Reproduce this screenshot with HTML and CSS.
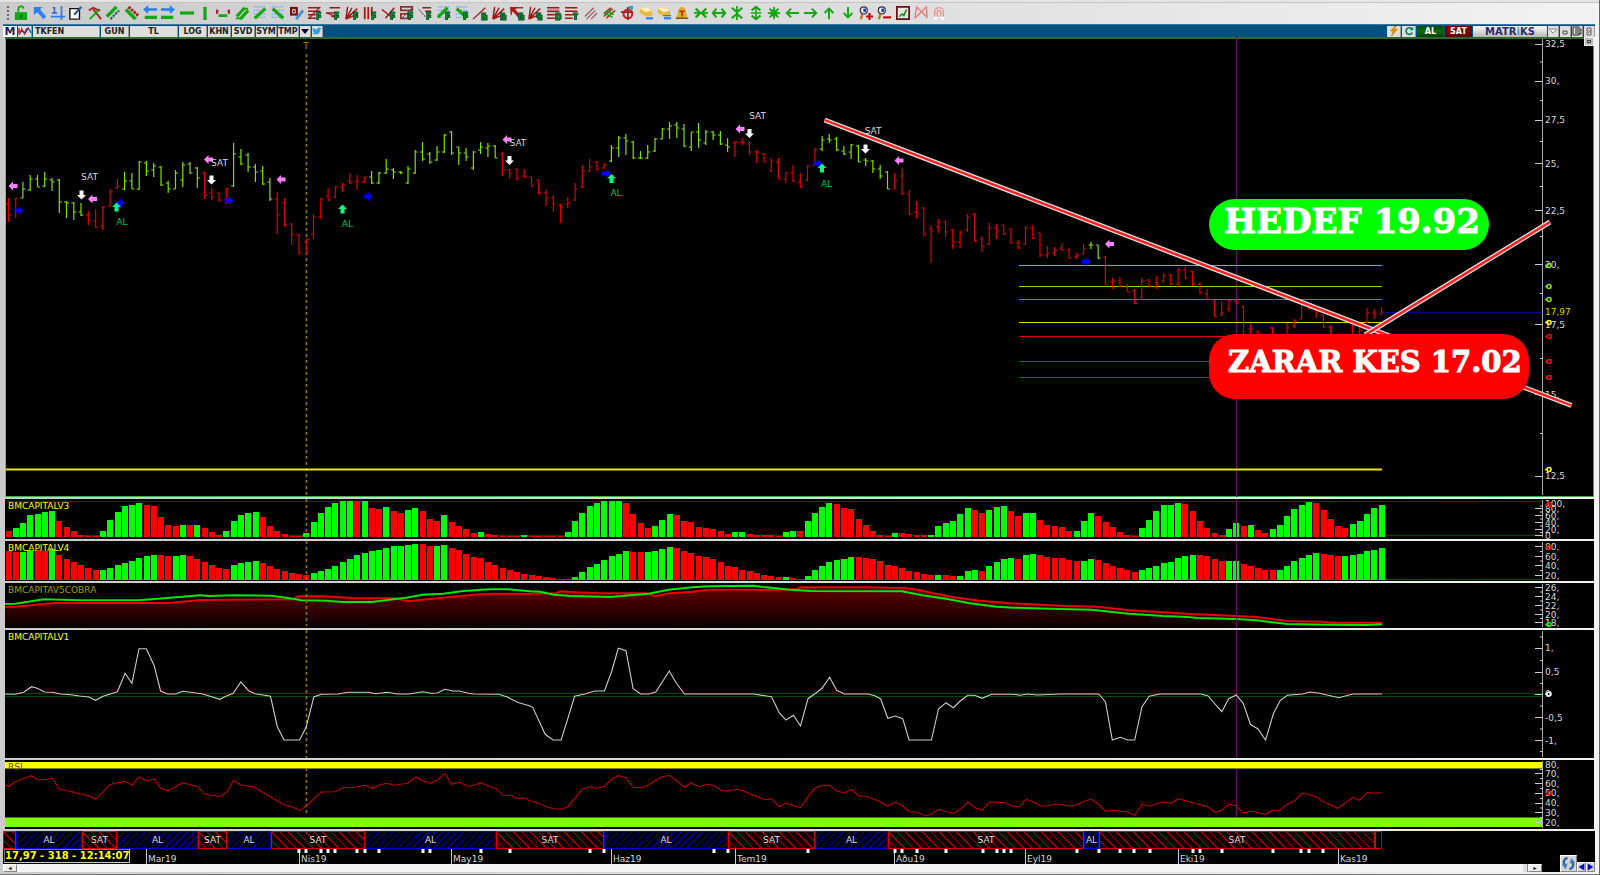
FILE: index.html
```html
<!DOCTYPE html>
<html lang="tr">
<head>
<meta charset="utf-8">
<title>TKFEN - Matriks</title>
<link rel="stylesheet" href="styles.css">
</head>
<body>
<div class="window">
  <nav class="toolbar" id="toolbar" aria-label="Araçlar"></nav>

  <header class="titlebar">
    <span class="brand-mark">M</span>
    <button class="tb-icon" aria-label="Grafik tipi"><svg viewBox="0 0 15 10"><path d="M1 2v6M1 5h3V3l3 5 2-5 2-1" fill="none" stroke="#c22" stroke-width="1.6"/><path d="M1 9l3-4 4 2 3-5 3 5" fill="none" stroke="#338" stroke-width="1.2"/></svg></button>
    <input class="symbol" aria-label="Sembol" value="TKFEN">
    <button class="w28">GUN</button>
    <button class="w48">TL</button>
    <button class="w28">LOG</button>
    <button class="w23">KHN</button>
    <button class="w23">SVD</button>
    <button class="w22">SYM</button>
    <button class="w22">TMP</button>
    <button class="tb-small" aria-label="Menü"><svg viewBox="0 0 10 10"><path d="M1 3h8L5 8z" fill="#003"/></svg></button>
    <button class="tb-small" aria-label="Twitter"><svg viewBox="0 0 12 10"><path d="M0 8c2 1 7 2 9-1 1-2 1-3 1-4l2-2-2 .3C8 0 6 1 6 3 4 3 2 2 1 1c-1 2 0 3 1 4L.6 4.600C1 6 2 6.500 3 7z" fill="#2fa4dd"/></svg></button>
    <span class="spacer"></span>
    <button class="tb-icon" aria-label="Hızlı emir"><svg viewBox="0 0 12 12"><path d="M7 0L2 6h3l-2 6 7-8H6l3-4z" fill="#f29100" stroke="#a50" stroke-width=".5"/></svg></button>
    <button class="tb-icon" aria-label="Yenile"><svg viewBox="0 0 12 12"><path d="M9.500 3.500A4 4 0 1 0 10 8" fill="none" stroke="#0a7d5c" stroke-width="2"/><path d="M7 5h4V1z" fill="#0a7d5c"/></svg></button>
    <button class="buy">AL</button>
    <button class="sell">SAT</button>
    <span class="brand">MATR<i>i</i>KS</span>
    <button class="tb-win" aria-label="Küçült"><svg viewBox="0 0 10 10"><path d="M1 3h8L5 7z" fill="#fff" stroke="#888"/></svg></button>
    <button class="tb-win" aria-label="Simge"><svg viewBox="0 0 10 10"><path d="M3 5h4v3H3z" fill="none" stroke="#444"/></svg></button>
    <button class="tb-win" aria-label="Pencere"><svg viewBox="0 0 10 10"><path d="M1 1h6v8H1zM3 3h3M3 5h3M3 7h3M8 3h1v5H7" fill="none" stroke="#222"/></svg></button>
    <button class="tb-win" aria-label="Kapat"><svg viewBox="0 0 10 10"><path d="M3 2h4v7H3zM4 4l3 3M7 4L4 7" fill="none" stroke="#666"/></svg></button>
  </header>

  <main class="charts">
    <section class="panel price" id="price">
      <div class="callout target">HEDEF 19.92</div>
      <div class="callout stop">ZARAR KES 17.02</div>
      <button class="maximize" aria-label="Büyüt"></button>
    </section>
    <section class="panel" id="v3"><h2>BMCAPITALV3</h2></section>
    <section class="panel" id="v4"><h2>BMCAPITALV4</h2></section>
    <section class="panel" id="cobra"><h2 class="dim">BMCAPITAV5COBRA</h2></section>
    <section class="panel" id="v1"><h2>BMCAPITALV1</h2></section>
    <section class="panel" id="rsi"><h2 class="ink">RSI</h2></section>
  </main>

  <footer class="footer">
    <div class="signals" id="signals"></div>
    <div class="dates" id="dates"><output class="quote">17,97 - 318 - 12:14:07</output></div>
    <div class="scroll">
      <button aria-label="Sola">◂</button>
      <span class="track"></span>
      <span class="thumb"></span>
      <button aria-label="Sağa">▸</button>
      <span class="axis-room"></span>
    </div>
    <div class="corner">
      <button class="refresh" aria-label="Güncelle"><svg viewBox="0 0 16 16"><path d="M7 2C3 3 2 7 4 10M9 14c4-1 5-5 3-8" fill="none" stroke="#2a62a8" stroke-width="2.500"/><path d="M1 9l6-1-2 6zM15 7L9 8l2-6z" fill="#3f7cc0"/></svg></button>
      <button class="step" aria-label="Geri"><svg viewBox="0 0 10 10"><path d="M9 0v10L1 5z" fill="#00c"/></svg></button>
      <button class="step" aria-label="İleri"><svg viewBox="0 0 10 10"><path d="M1 0v10l8-5z" fill="#00c"/></svg></button>
    </div>
  </footer>
</div>
<script src="chart.js"></script>
</body>
</html>
```
FILE: styles.css
```css
* { box-sizing: border-box; }

body {
  margin: 0;
  font-family: "DejaVu Sans", Verdana, sans-serif;
  font-size: 9px;
  background: #dcdcdc;
}

button, input { font: inherit; margin: 0; padding: 0; border: 0; border-radius: 0; }
button svg { display: block; }

.window {
  display: flex;
  flex-direction: column;
  min-height: 100vh;
  padding: 0 4px 0 3px;
  background-color: #dedede;
  background-image: linear-gradient(#e4e4e4 2px, #c4c4c4 2px, #c4c4c4 3px, transparent 3px), linear-gradient(90deg, #cbcbcb, #dcdcdc 50%, #f2f2f2);
  border-right: 1px solid #666;
  border-bottom: 1px solid #777;
  overflow: hidden;
}

/* Toolbar */
.toolbar {
  display: flex;
  justify-content: space-between;
  align-items: center;
  max-width: 944px;
  height: 22px;
  margin-top: 2px;
  padding-left: 4px;
}
.toolbar button { width: 14px; height: 14px; background: none; }
.toolbar button svg { width: 14px; height: 14px; overflow: visible; }
.toolbar .grip { width: 3px; height: 14px; border-left: 2px dotted #567; }

/* Title bar */
.titlebar {
  display: flex;
  align-items: center;
  gap: 1px;
  height: 13px;
  padding: 1px 0;
  background: #03517f;
  border-top: 1px solid #3c7898;
  font-size: 8px;
  font-weight: bold;
  color: #222;
}
.titlebar button, .titlebar input { height: 11px; line-height: 11px; background: #dedede; border-right: 1px solid #999; color: #222; }
.titlebar svg { width: 10px; height: 10px; margin: 0 auto; }
.brand-mark { width: 14px; height: 11px; background: #fff; color: #1b1d5e; font: bold 11px/11px "DejaVu Sans", sans-serif; text-align: center; }
.titlebar .tb-icon { width: 14px; }
.titlebar .tb-icon:nth-child(2) svg { width: 14px; }
.titlebar .symbol { width: 67px; padding-left: 2px; }
.titlebar .w28 { width: 28px; }
.titlebar .w48 { width: 48px; }
.titlebar .w23 { width: 23px; }
.titlebar .w22 { width: 21px; }
.titlebar .tb-small, .titlebar .tb-win { width: 11px; }
.spacer { flex: 1; }
.titlebar .buy, .titlebar .sell { width: 27px; color: #fff; border: 0; }
.titlebar .buy { background: linear-gradient(#0a4d0a, #0b6a0b 50%, #063f06); }
.titlebar .sell { background: linear-gradient(#6d0000, #8a0000 50%, #5a0000); }
.brand { width: 74px; height: 11px; background: linear-gradient(#fafafa, #b8b8b8); color: #2c2a6c; font: bold 10px/11px "DejaVu Sans", sans-serif; text-align: center; }
.brand i { font-style: normal; color: #2fa4dd; }

/* Panels */
.charts {
  flex: 1;
  display: grid;
  grid-template-rows: 460fr 40fr 40fr 45fr 128fr 69fr;
  gap: 2px;
  margin: 0 1px 0 2px;
}
.panel { position: relative; overflow: hidden; background: #000; min-height: 0; }
.panel > svg { position: absolute; inset: 0; width: 100%; height: 100%; }
.price { box-shadow: inset 0 2px #2f6a2f, inset 1px 0 #6fcf6f, inset -1px -1px #4aa84a; }
.panel h2 { position: absolute; z-index: 2; top: 2px; left: 3px; margin: 0; font-size: 9px; line-height: 11px; font-weight: normal; color: #ff0; }
.panel h2.dim { color: #a0a000; }
.panel h2.ink { color: #4a4a00; }
.label { position: absolute; z-index: 2; line-height: 10px; white-space: nowrap; color: #d8d8d8; transform: translate(-50%, -50%); }
.label.axis { transform: translate(0, -50%); }
.label.buy-signal { color: #00c060; }
.label.last { color: #d8d800; }
.label.session { color: #a09000; }
.overlay { z-index: 3; }

.callout {
  position: absolute;
  z-index: 4;
  left: 75.770%;
  display: flex;
  border-radius: 26px;
  color: #fff;
  font-family: "DejaVu Serif", "Liberation Serif", serif;
  font-weight: bold;
  white-space: nowrap;
  -webkit-text-stroke: 1px #fff;
}
.target { top: 35.200%; width: 280px; height: 51px; padding-left: 15px; background: #0f0; font-size: 34px; line-height: 45px; }
.stop { top: 64.500%; width: 320px; height: 65px; padding-left: 19px; background: #f00; font-size: 29px; line-height: 56px; }
.maximize { position: absolute; z-index: 4; right: 0; top: 0; width: 10px; height: 9px; background: #bbb; border: 1px solid #eee; outline: 1px solid #444; outline-offset: -4px; }

/* Footer */
.footer { position: relative; margin-top: 2px; padding-bottom: 2px; }
.signals { display: flex; height: 18px; background: #000; }
.signals span { flex-basis: 0; min-width: 0; overflow: hidden; text-align: center; line-height: 18px; color: #ddd; }
.signals .al { box-shadow: inset 0 0 0 1px #0000d8; background: repeating-linear-gradient(135deg, #0000a0 0 1px, #00000c 1px 5px); }
.signals .sat { box-shadow: inset 0 0 0 1px #d80000; background: repeating-linear-gradient(45deg, #a80000 0 1px, #0c0000 1px 6px); }
.signals .open { box-shadow: inset 0 0 0 1px #d80000; }
.dates { position: relative; height: 15px; background: #000; }
.dates svg { position: absolute; inset: 0; width: 100%; height: 100%; }
.quote { position: absolute; z-index: 3; left: 1px; top: 0; height: 14px; background: #000; border: 1px solid; border-color: #777 #ccc #ccc #777; color: #ff0; font-size: 10px; line-height: 12px; font-weight: bold; white-space: nowrap; }
.scroll { display: flex; height: 8px; background: #f4f4f4; }
.scroll button { width: 14px; height: 8px; font-size: 6px; line-height: 6px; background: #ececec; border: 1px solid; border-color: #fff #888 #888 #fff; }
.track { flex: 1; }
.thumb { width: 5px; background: #ddd; border-right: 1px solid #888; }
.axis-room { width: 53px; background: #000; }
.corner { position: absolute; z-index: 4; right: 0; bottom: 2px; display: flex; align-items: flex-end; }
.corner button { background: #d4d4d4; border: 1px solid; border-color: #fff #888 #888 #fff; }
.refresh { width: 17px; height: 17px; }
.step { width: 9px; height: 10px; }
.step svg { width: 7px; height: 8px; }
```
FILE: chart.js
```js
const X0 = 5, W = 1589, AXIS = 1542.5, N = 190;
const barX = i => 8.4 + 7.265 * i;
const GREEN = '#80e000', RED = '#e00000';

/* ---------- toolbar ---------- */
const p = (d, c, w = 1.5, extra = '') => `<path d="${d}" fill="none" stroke="${c}" stroke-width="${w}" ${extra}/>`;
const f = (d, c) => `<path d="${d}" fill="${c}"/>`;
const G = '#12a812', DR = '#a01818', B = '#2a80f0';
const mark = { F: 'M11 16V8h4M11 12h4', G: 'M15 9h-4v6h4v-3h-2', S: 'M15 9h-4v3h4v3h-4', D: 'M11 9h3l1 2v3l-1 1h-3z', T: 'M9 9h6M12 9v7' };
const tag = k => p(mark[k], '#043', 3.2) + p(mark[k], '#0a8a20', 1.5);
const rows = p('M0 2h14M0 6h14M0 10h9M0 14h9', DR, 1.8);
const dots = p('M1 1h14M1 5h14M1 9h14M1 13h14', '#6aa0f0', 1.6, 'stroke-dasharray="1.5 1.3"');
const fan = p('M1 15L3 1M1 15L8 2M1 15L14 3M1 15L15 9', DR, 1.7);
const eraser = f('M1 3l7-2 7 4v6l-7 1-7-4z', '#e8b840') + f('M1 3l7-2 7 4-7 2z', '#fff0b8') + p('M8 14h8', B, 2.4);
const lens = f('M9.500 5a4 4 0 1 1-8 0 4 4 0 0 1 8 0z', '#eef') + p('M9.500 5a4 4 0 1 1-8 0 4 4 0 0 1 8 0z', '#334', 1.4) + f('M5 3h3v4H5z', '#2540a0') + p('M4 9l-2 6', '#b07a10', 2.6);
const icons = [
  ['Kilit', p('M5 7V4a3 3 0 0 1 6-1', G, 2) + f('M1 7h14v9H1z', G) + f('M7 10h2v4H7z', '#063')],
  ['Seç', f('M1 1h10L8 4l7 8-3 3-7-8-4 3z', B)],
  ['Artı imleç', p('M0 12h16M12 0v16', B, 2) + p('M1 8h6M4 1v7M2 2h2', '#2060d0', 1.6)],
  ['Düzenle', f('M1 3h12v13H1z', '#fff') + p('M1 3h11v12H1z', '#111', 1.6) + p('M6 10l8-9', '#258', 2.5)],
  ['Ayarlar', p('M1 5l5-3 4 2 4 1M6 4l9 11', '#a22', 2.2) + p('M2 15L12 5', G, 2.2)],
  ['Yükselen trend', p('M1 12L12 1', G, 4) + p('M5 15L15 5', '#275', 2.6, 'stroke-dasharray="3 1"')],
  ['Düşen trend', p('M1 4l11 11', G, 4) + p('M4 1l11 10', '#a22', 3.4, 'stroke-dasharray="3 1"')],
  ['Sola', p('M5 4h11', B, 3) + f('M0 4l6-5v10z', B) + p('M2 13h14', G, 3.8)],
  ['Sağa', p('M0 4h11', B, 3) + f('M16 4l-6-5v10z', B) + p('M0 13h14', G, 3.8)],
  ['Yatay çizgi', p('M0 8h16', G, 3.6)],
  ['Dikey çizgi', p('M8 1v15', G, 3.8)],
  ['Ölçü', p('M1 4v5M15 4v5M0 6h3M13 6h3', '#a22', 2) + p('M3 11h10', G, 3.2)],
  ['Kanal', p('M2 12L11 2M6 15L15 5', G, 3.6) + p('M1 14h6M10 3h5', G, 2)],
  ['Izgara artan', dots + p('M2 14L14 3', G, 3.8)],
  ['Izgara azalan', dots + p('M2 3l12 11', G, 3.8)],
  ['Kalem', f('M0 1h9v10H0z', '#701010') + p('M3 4h3v4H3z', '#eee', 1) + p('M7 15l8-10', '#4a90d0', 3.2)],
  ['Fibo 1', rows + p('M1 14L14 1', DR) + tag('F')],
  ['Fibo 2', p('M4 2h12M0 8h14M6 12h4', DR, 1.8) + p('M1 8l12 5', DR) + tag('F')],
  ['Fibo 3', fan + tag('F')],
  ['Fibo 4', p('M2 1v14M6 1v14M10 1v10', DR, 2) + tag('F')],
  ['Fibo 5', p('M0 4l10 8M4 14L14 2', DR, 1.8) + tag('F')],
  ['Fibo 6', p('M1 1h13v4H1zM1 9h8v5H1z', '#833', 2) + p('M2 14L14 2', '#444', 1) + tag('F')],
  ['Fibo 7', p('M5 2h10M8 6h7', DR, 1.8) + p('M1 4l8 9', '#555', 1.2, 'stroke-dasharray="2 1"') + tag('F')],
  ['Fibo 8', dots + p('M1 13L12 2', G, 3.8) + tag('F')],
  ['Fibo 9', dots + p('M2 3l10 9', G, 3.8) + tag('F')],
  ['Gann 1', p('M0 15L14 2', DR) + tag('G')],
  ['Gann 2', fan + tag('G')],
  ['Gann 3', f('M0 1h9L6 4l8 9-3 2L3 6l-2 6z', '#b01818') + p('M6 2h9', DR) + tag('G')],
  ['Hız', fan + tag('S')],
  ['Seviye D', rows + p('M1 4h14M1 8h8', '#666', 1, 'stroke-dasharray="1 1"') + tag('D')],
  ['Seviye T', rows + tag('T')],
  ['Paralel', p('M1 12L11 2M3 15L13 5M8 15l7-7', '#955', 1.3)],
  ['Elips', p('M2 12L12 3M5 14L15 5M2 9L10 2', '#932', 1.8) + p('M3 8l9 5M5 5l8 5', G, 1.8)],
  ['Daire', p('M14 9a5 5 0 1 1-10 0 5 5 0 0 1 10 0z', '#c22', 2.4) + p('M1 7h14M9 1v15', '#922', 2) + f('M10 0h5v4h-5z', '#3aa0b0')],
  ['Sil', eraser],
  ['Hepsini sil', eraser + p('M7 11h9', B, 1.6)],
  ['Alarm', f('M1 14c3-3 1-13 7-13s4 10 7 13z', '#d8b020') + p('M5 6h6M8 6v6', '#c22', 1.8) + p('M1 14h14', '#741', 1.5)],
  ['Daralt', p('M0 8h16', G, 2) + p('M2 3l5 5-5 5M14 3L9 8l5 5', G, 2.6)],
  ['Genişlet', p('M2 8h12', G, 2.4) + p('M5 3L1 8l4 5M11 3l4 5-4 5', G, 2.4)],
  ['Dikey daralt', p('M8 0v16', G, 2) + p('M2 2l6 5 6-5M2 14l6-5 6 5', G, 2.4)],
  ['Dikey genişlet', p('M8 2v12M2 8h12', G, 1.8) + p('M3 5l5-4 5 4M3 11l5 4 5-4', G, 2.4)],
  ['Sığdır', p('M8 1v14M1 8h14M3 3l10 10M13 3L3 13', G, 2) + p('M5 5h6v6H5z', G, 1.5)],
  ['Sol ok', p('M2 8h14M7 3L2 8l5 5', G, 2.2)],
  ['Sağ ok', p('M0 8h14M9 3l5 5-5 5', G, 2.2)],
  ['Yukarı ok', p('M8 15V3M3 8l5-5 5 5', G, 2.2)],
  ['Aşağı ok', p('M8 1v12M3 8l5 5 5-5', G, 2.2)],
  ['Yakınlaştır', lens + p('M8 12h8M12 8v8', '#c00', 2.4)],
  ['Uzaklaştır', lens + p('M7 13h9', '#c00', 2.4)],
  ['Grafik', f('M1 1h14v14H1z', '#dfe8df') + p('M1 1h14v14H1z', '#611', 2) + p('M4 12l3-3 2 2 3-7', '#187018', 1.6)],
  ['Formasyon', p('M1 14L3 1l11 11M1 14L14 1l1 13', '#ec7878', 1.5)],
  ['Mıknatıs', p('M3 12V7a5 5 0 0 1 10 0v5M6 12V7a2 2 0 0 1 4 0v5', '#f08080', 1.3) + p('M2 14h4M10 14h4', '#fff', 3)],
];
document.getElementById('toolbar').innerHTML = '<span class="grip"></span>' + icons
  .map(([name, body]) => `<button aria-label="${name}"><svg viewBox="0 0 16 16">${body}</svg></button>`).join('');

/* ---------- chart data ---------- */
// high low open close per session, vertical plot coordinates
const ohlc = `198 222 204 215,198 218 211 198,182 198 198 189,175 191 190 179,175 187 179 187,172 187 186 179,178 191 180 182,179 213 180 202,201 218 202 203,202 220 203 212,203 216 212 215,211 225 215 220,209 228 221 227,206 230 226 207,189 207 206 192,179 189 188 186,172 190 189 181,173 189 181 189,161 190 189 162,161 176 163 171,163 177 170 166,166 186 167 185,181 193 183 189,170 189 189 173,162 187 180 165,162 174 164 173,167 188 168 178,172 199 173 195,188 200 193 197,193 202 193 200,188 204 200 189,143 187 186 154,149 165 157 164,153 172 155 167,164 182 167 172,166 185 171 184,178 201 182 199,192 234 199 215,198 227 203 225,223 245 224 234,234 255 235 253,239 254 242 239,214 239 234 217,198 219 217 199,188 201 196 200,186 198 197 187,183 192 187 185,173 184 181 183,175 190 182 181,177 183 182 177,171 184 177 183,172 184 183 173,159 174 173 169,168 179 170 172,171 174 172 173,166 184 183 169,150 174 173 152,142 161 152 159,152 164 154 162,146 161 160 152,134 153 152 135,131 155 132 153,147 165 147 153,148 161 153 157,151 170 168 152,142 154 150 147,143 157 148 146,145 158 146 158,152 176 154 170,169 179 170 173,169 181 169 178,169 178 176 177,177 187 177 186,180 195 180 193,190 206 193 198,195 212 198 204,204 223 205 207,197 208 204 203,183 201 200 189,165 188 187 171,159 172 171 167,161 171 162 169,163 169 168 165,145 162 161 148,136 157 148 138,134 155 138 141,141 159 142 158,151 159 158 158,145 159 158 152,138 152 151 139,128 139 139 129,122 139 129 126,122 138 125 128,124 147 129 146,132 151 147 132,123 148 132 140,130 145 143 132,131 140 132 135,131 145 135 144,138 152 145 147,141 157 143 142,138 145 142 143,142 155 144 152,150 163 152 152,153 162 154 162,158 172 171 161,158 179 162 179,172 183 179 173,165 182 173 181,173 188 182 187,165 181 180 166,148 166 165 149,136 151 149 140,134 143 139 140,137 151 139 150,146 155 151 154,144 159 152 145,145 162 146 162,158 166 160 161,160 173 161 169,165 179 169 176,171 189 172 189,173 189 189 181,168 195 176 194,190 215 194 214,201 219 212 214,207 237 208 234,225 263 229 231,219 233 227 222,220 237 222 232,229 249 230 242,230 248 242 233,214 232 230 217,213 242 214 241,236 252 239 246,223 245 244 228,224 239 228 231,225 235 225 234,228 244 229 243,240 249 243 248,226 245 244 228,225 239 228 238,233 257 233 255,246 258 255 253,247 256 253 250,243 251 248 250,248 259 250 258,253 259 257 255,244 254 254 249,242 249 245 245,245 259 245 258,256 285 257 284,278 289 282 281,277 287 281 286,284 292 287 292,289 304 291 303,278 300 299 281,279 288 280 286,276 289 287 284,274 283 281 276,274 285 275 284,268 287 284 270,266 279 270 278,271 286 271 284,282 294 284 293,289 300 294 299,300 317 300 317,301 316 315 313,300 312 309 301,299 304 301 303,305 338 307 336,324 342 329 329,330 350 332 345,335 350 340 345,327 342 328 340,335 350 338 340,323 338 337 328,319 328 326 321,304 319 319 305,303 310 304 308,307 318 310 312,314 328 315 327,325 338 327 334,335 350 337 345,336 350 345 338,323 338 337 326,326 335 332 330,308 323 322 313,309 319 313 314,307 315 314 312`
  .split(',').map(s => s.split(' ').map(Number));
const upRanges = [[2, 10], [16, 26], [31, 36], [50, 67], [83, 99], [112, 121], [149, 150]];
const v3 = 'R122 G114 G99 G76 G72 G66 G64 R92 R111 R124 R134 R138 R138 G124 G91 G66 G48 G44 G39 R44 R48 R82 R104 R109 G104 R104 G104 R114 R126 R134 G124 G94 G76 G69 G66 R82 R107 R122 R132 R138 R138 G129 G97 G69 G52 G39 G34 G34 R34 G34 R54 R56 G51 R64 R69 G61 G54 R62 R87 R92 G76 R96 R107 R117 R129 G126 R131 R134 R137 R138 R138 G136 R138 R138 R138 R138 R138 G126 G94 G69 G48 G39 G34 G34 G34 R39 R72 R99 R114 G109 G91 G72 R74 R94 R97 R111 R114 R117 R124 R131 G126 G126 R131 R134 R136 R136 R138 G126 G124 R124 G94 G69 G52 G39 R41 R54 R57 R87 R106 R124 R134 R138 G129 R129 R131 R134 R136 G134 G109 G99 G94 G72 G54 R59 R69 G59 G51 G48 R62 R79 G69 G69 R89 R104 R109 R111 R122 G122 G92 G69 R79 R97 R112 R127 R136 R138 G114 G89 G64 G46 G44 G39 R42 R64 R94 R114 R129 R134 G117 G99 R108 G106 R119 R129 G117 G104 G79 G57 G44 G36 R39 R61 R87 R108 R114 G101 G94 G72 G54 G44';
const v4 = 'R182 R186 G185 G180 R180 R182 G178 R194 R207 R217 R226 R234 R241 G240 G233 G226 G219 G213 G204 G199 G194 R196 R199 G199 G196 R199 R207 R217 R226 R234 R237 G224 G219 G216 G213 R219 R229 R237 R242 R249 R252 R255 G249 G244 G237 G229 G216 G207 G196 G189 G184 G179 G174 G169 G167 G164 G161 R161 R169 G168 G164 R174 R179 R192 R201 R204 R216 R224 R234 R239 R247 R252 R255 R259 R262 R264 R267 R267 G262 G247 G232 G221 G209 G199 G192 G184 R186 R186 G186 G182 G177 G171 R174 R184 R189 R197 R201 R207 R217 R227 R232 R239 R244 R249 R254 R257 R262 G262 R264 R267 G257 G241 G229 G216 G209 G207 G201 R201 R204 R207 R214 R224 R227 R234 R242 R247 R251 R254 G254 R254 R259 G257 G244 G241 R244 G229 G216 G207 G204 R207 G196 G192 R196 R201 R204 R204 R209 R214 G214 G207 R209 R219 R227 R234 R241 R247 G239 G234 G229 G219 G216 G204 G199 G194 R194 R197 R207 R212 G212 G212 R222 R227 R234 R241 R241 G239 G227 G214 G204 G196 G189 R192 R194 R199 G199 G194 G192 G184 G179 G174';
// each line is stored in three consecutive segments
const cobraUp = ['15,342 45,341 130,328 240,331 410,331 540,320 590,316 620,318 690,316 800,317 830,321 870,327 890,331 965,332 1010,336 1100,336 1140,331 1200,323 1250,314 1310,311 1370,303 1450,298 1500,298',
  '0,304 30,305 70,314 120,318 240,321 270,318 350,311 410,299 480,292 530,289 660,287 690,291 770,299 830,303 1100,304 1160,316 1230,326 1300,340 1380,350 1430,353',
  '0,357 90,359 200,371 300,378 370,381 400,384 510,387 570,391 660,402 780,404 890,405 935,403'];
const cobraDown = ['15,351 45,350 160,339 500,339 590,330 870,328 880,319 960,319 1040,324 1175,325 1190,330 1210,334 1240,330 1300,324 1400,314 1450,311',
  '0,311 75,310 90,304 140,307 200,309 345,310 370,319 410,310 480,305 530,299 760,299 790,297 800,292 990,292 1110,294 1150,300 1190,309 1250,321 1330,332 1420,340',
  '0,347 110,350 200,361 300,367 380,372 500,377 570,381 660,393 760,395 790,398 935,398'];
const v1 = ['15,612 45,613 70,607 93,590 110,595 132,606 155,607 180,612 210,614 235,618 262,621 283,631 305,619 347,605 370,550 390,580 411,476 433,476 456,527 475,603 495,612 520,612 540,604 565,607 600,612 650,628 670,618 690,610 712,576 735,602 755,611 800,619 820,710 840,750 886,750 905,712 928,621 950,613 1000,612 1030,607 1090,607 1110,611 1145,607 1175,612 1210,612 1250,605 1275,610 1293,609 1316,598 1340,603 1358,603 1385,610 1400,612 1475,613 1500,621 1530,637',
  '0,648 8,652 45,733 68,750 92,750 112,685 132,619 165,611 190,603 220,603 241,546 261,475 284,482 305,596 327,612 350,612 372,606 412,543 433,580 457,612 660,612 714,620 737,668 757,690 779,676 800,708 822,626 842,612 864,594 886,562 907,601 930,612 1000,612 1020,617 1037,627 1058,685 1080,678 1102,686 1121,750 1187,750 1208,657 1230,638 1252,653 1272,633 1295,616 1315,616 1337,625 1365,613 1430,613 1450,616 1470,612 1500,615',
  '0,612 112,612 132,636 152,750 175,742 197,750 217,750 238,650 259,619 290,612 410,612 430,618 450,642 470,665 490,626 512,615 532,640 553,703 575,717 597,750 620,670 640,631 660,616 705,612 725,606 750,609 810,623 850,612 935,612'];
const rsi = ['15,885 27,889 45,875 68,866 93,857 110,869 135,869 155,865 175,897 200,902 262,917 283,928 325,884 345,879 370,874 390,885 411,861 433,873 456,868 475,895 497,902 540,878 585,890 605,912 650,920 672,905 690,871 712,885 750,890 780,909 840,945 865,951 886,962 905,948 950,906 990,905 1015,893 1050,892 1080,886 1102,895 1122,885 1142,880 1165,886 1205,880 1230,861 1250,873 1272,880 1295,869 1316,851 1335,883 1358,877 1385,889 1400,886 1422,878 1445,889 1467,896 1487,916 1510,916 1530,926 1550,923',
  '0,932 25,940 50,951 70,956 92,958 112,950 132,925 155,898 178,890 198,895 220,889 241,868 261,857 284,863 305,893 330,893 350,885 372,871 390,861 412,856 433,872 457,892 475,879 500,890 523,883 545,887 565,901 585,904 610,898 630,902 650,912 695,929 714,926 737,950 757,939 779,947 800,953 822,920 842,895 864,886 886,886 907,904 930,908 950,898 972,918 995,919 1037,936 1058,948 1080,936 1102,948 1121,965 1145,967 1168,978 1187,972 1208,958 1230,965 1252,970 1272,958 1295,936 1315,953 1337,961 1358,937 1380,936 1405,938 1425,948 1447,951 1467,928 1490,937 1510,948 1530,948 1550,943',
  '0,943 27,949 45,946 70,934 90,928 112,943 132,964 155,961 197,967 217,976 238,943 260,949 300,935 322,940 343,926 385,938 430,951 450,967 470,961 490,943 512,947 532,970 553,963 597,973 618,961 638,961 660,943 682,932 702,910 725,914 745,921 765,935 807,955 830,938 850,922 870,931 892,907 915,910 935,907'];
const segments = [[0, 2.957], [530, 2.957], [1060, 2.904]];
const points = line => line.flatMap((part, k) => part.split(' ').map(pt => {
  const [x, y] = pt.split(',').map(Number);
  return (segments[k][0] + x / segments[k][1]).toFixed(1) + ',' + (490 + y / 3).toFixed(1);
})).join(' ');

/* ---------- drawing helpers ---------- */
const line = (x1, y1, x2, y2, c, w = 1, extra = '') => `<line x1="${x1}" y1="${y1}" x2="${x2}" y2="${y2}" stroke="${c}" stroke-width="${w}" ${extra}/>`;
const poly = (pts, c, w) => `<polyline points="${pts}" fill="none" stroke="${c}" stroke-width="${w}"/>`;
const rect = (x, y, w, h, c) => `<rect x="${x}" y="${y}" width="${w}" height="${h}" fill="${c}"/>`;
const ring = (y, c) => `<circle cx="1549" cy="${y}" r="2" fill="none" stroke="${c}" stroke-width="1.6"/>` + line(1545, y, 1547, y, c, 1.6);
const session = (y0, y1) => line(306.5, y0, 306.5, y1, '#8a7800', 1.6, 'stroke-dasharray="3 3"');
const cursor = (y0, y1) => line(1236.5, y0, 1236.5, y1, '#680a68');

function draw(id, y0, h, under, labels = [], over = '') {
  const panel = document.getElementById(id);
  const svg = (body, cls) => `<svg class="${cls}" viewBox="${X0} ${y0} ${W} ${h}" preserveAspectRatio="none">${body}</svg>`;
  const text = labels.map(([x, y, t, cls = '']) =>
    `<span class="label ${cls}" style="left:${((x - X0) / W * 100).toFixed(2)}%;top:${((y - y0) / h * 100).toFixed(2)}%">${t}</span>`).join('');
  panel.insertAdjacentHTML('beforeend', svg(under, 'plot') + text + (over ? svg(over, 'overlay') : ''));
}
const ticks = (majors, minors, y0, y1) => line(AXIS, y0, AXIS, y1, '#aaa') +
  majors.map(y => line(1535, y, AXIS, y, '#ccc')).join('') + minors.map(y => line(1540, y, AXIS, y, '#ccc')).join('');
const axisLabels = pairs => pairs.map(([y, t]) => [1545, y, t, 'axis']);
const majorsOf = pairs => pairs.map(q => q[0]);
const between = pairs => pairs.slice(1).map((q, i) => (q[0] + pairs[i][0]) / 2);

/* ---------- price ---------- */
const isUp = i => upRanges.some(([a, b]) => i >= a && i <= b);
const path = { up: '', down: '' };
ohlc.slice(0, N).forEach(([hi, lo, o, c], i) => {
  const x = barX(i).toFixed(1);
  path[isUp(i) ? 'up' : 'down'] += `M${x} ${hi}V${lo}M${x} ${o}h-2.500M${x} ${c}h2.500`;
});
const arrow = (x, y, c, turn) => `<path transform="translate(${x} ${y}) rotate(${turn})" d="M-4.500-2H0V-4.500L4.500 0 0 4.500V2H-4.500z" fill="${c}"/>`;
const many = (list, c, turn) => list.map(([x, y]) => arrow(x, y, c, turn)).join('');
const priceAxis = [[44.5, '32,5'], [81.5, '30,'], [120.5, '27,5'], [163.5, '25,'], [210.5, '22,5'], [264.5, '20,'], [324.5, '17,5'], [394.5, '15,'], [476.5, '12,5']];
const levels = [[265.5, '#6ccc00'], [286.5, '#80e000'], [299.5, '#5a9a00'], [322.5, '#d8d800'], [336.5, '#e00000'], [361.5, '#e00000'], [377.5, '#e00000']];
const trend = d => p(d, '#ddd', 5) + p(d, '#ff1c1c', 2.4);
draw('price', 37, 460,
  cursor(37, 497) + ticks(majorsOf(priceAxis), [62, 100.5, 141.5, 186.5, 236.5, 293.5, 358.5, 433.5], 39, 495) +
  session(54, 497) +
  levels.map(([y, c]) => line(1019, y, 1382, y, c)).join('') +
  line(6, 469.5, 1382, 469.5, '#e8e800', 2) + line(1385, 312.5, AXIS, 312.5, '#000096') +
  p(path.up, GREEN, 1.2) + p(path.down, RED, 1.2) +
  many([[13, 186], [92.5, 199], [208.5, 159.5], [281, 179.5], [507, 139.5], [740, 129], [899, 160.5], [1109.5, 244]], '#ff80ff', 180) +
  many([[19, 210.5], [120, 203], [229, 200.5], [368, 196.5], [606.5, 173.5], [817.5, 163.5], [1086.5, 261.5]], '#00f', 0) +
  many([[81.5, 195], [211.5, 180], [509.5, 160.5], [749.5, 133.5], [865.5, 149]], '#fff', 90) +
  many([[116.5, 207], [342.5, 209], [611.5, 178.5], [822, 168]], '#00ff80', -90),
  [...axisLabels(priceAxis), [1545, 312.5, '17,97', 'axis last'], [306, 45.5, 'T', 'session'],
    ...[[89.5, 177], [219.5, 163], [518, 143.5], [757.5, 116.5], [873, 131.5]].map(([x, y]) => [x, y, 'SAT']),
    ...[[122, 221.5], [347.5, 224], [616, 193.5], [826.5, 183.5]].map(([x, y]) => [x, y, 'AL', 'buy-signal'])],
  ring(265.5, '#80e000') + ring(286.5, '#80e000') + ring(299.5, '#80e000') + ring(322.5, '#ff0') +
  ring(336.5, '#f00') + ring(361.5, '#f00') + ring(377.5, '#f00') + ring(469.5, '#ff0') +
  trend('M824.500 120L1571.500 405.500') + trend('M1365 335L1550 222'));

/* ---------- indicators ---------- */
const bars = (src, base) => '<g shape-rendering="crispEdges">' + src.split(' ').map((s, i) => {
  const top = 490 + s.slice(1) / 3;
  return rect((barX(i) - 2.9).toFixed(1), top.toFixed(1), 6, (base - top).toFixed(1), s[0] === 'G' ? '#00ff00' : '#ff0000');
}).join('') + '</g>';

const a3 = [[503.5, '100,'], [508.5, '80,'], [515.5, '60,'], [522.5, '40,'], [529.5, '20,'], [535.5, '0']];
draw('v3', 499, 40, line(5, 501.5, AXIS, 501.5, '#700000') + line(5, 535.5, AXIS, 535.5, '#004000', 1.5) + bars(v3, 537) +
  session(499, 539) + cursor(499, 539) + ticks(majorsOf(a3).slice(1), between(a3), 500, 537), axisLabels(a3), ring(504.5, '#f00'));

const a4 = [[546.5, '80,'], [556.5, '60,'], [565.5, '40,'], [575.5, '20,']];
draw('v4', 541, 40, line(5, 579.5, AXIS, 579.5, '#005000') + bars(v4, 579.5) +
  session(541, 581) + cursor(541, 581) + ticks(majorsOf(a4), between(a4), 542, 580), axisLabels(a4), ring(547.5, '#f00'));

const a5 = [[587.5, '26,'], [596.5, '24,'], [605.5, '22,'], [614.5, '20,'], [622.5, '18,']];
draw('cobra', 583, 45,
  '<defs><linearGradient id="fade" gradientUnits="userSpaceOnUse" x1="0" y1="587" x2="0" y2="628"><stop stop-color="#640000"/><stop offset="1" stop-color="#080000"/></linearGradient></defs>' +
  `<polygon points="5,628 ${points(cobraDown)} 1382,628" fill="url(#fade)"/>` +
  poly(points(cobraDown), '#e80000', 2) + poly(points(cobraUp), '#00e800', 2) +
  session(588, 626) + cursor(583, 628) + ticks(majorsOf(a5), between(a5), 584, 627), axisLabels(a5), ring(624.5, '#0e0'));

const a1 = [[648.5, '1,'], [672.5, '0,5'], [694.5, '0'], [717.5, '-0,5'], [740.5, '-1,']];
draw('v1', 630, 128, line(5, 693.5, AXIS, 693.5, '#700000') + line(5, 696.5, AXIS, 696.5, '#004800') +
  session(630, 758) + cursor(630, 758) + poly(points(v1), '#ccc', 1.1) +
  ticks(majorsOf(a1), [637, ...between(a1), 751.5], 631, 757), axisLabels(a1), ring(694, '#fff'));

const ar = [[765.5, '80,'], [773.5, '70,'], [783.5, '60,'], [793.5, '50,'], [803.5, '40,'], [812.5, '30,'], [822.5, '20,']];
draw('rsi', 760, 69, rect(5, 762, 1537, 6.5, '#ff0') + rect(5, 817.5, 1537, 9.5, '#80ff00') +
  session(768, 816) + cursor(769, 817) + poly(points(rsi), '#c00000', 1.1) +
  ticks(majorsOf(ar).slice(1), between(ar), 761, 828), axisLabels(ar), ring(793, '#f00'));

/* ---------- signal strip and dates ---------- */
const edges = [3, 16, 82, 117, 198, 227, 271, 365, 496, 604, 728, 815, 888, 1084, 1099, 1375, 1382, 1595];
document.getElementById('signals').innerHTML = edges.slice(1).map((e, i) => {
  const cls = i === 16 ? 'rest' : i === 15 ? 'open' : i % 2 ? 'al' : 'sat';
  return `<span class="${cls}" style="flex-grow:${e - edges[i]}">${i && i < 15 ? cls.toUpperCase() : ''}</span>`;
}).join('');

const months = [[146.5, 'Mar19'], [299.5, 'Nis19'], [451.5, 'May19'], [611.5, 'Haz19'], [735.5, 'Tem19'], [894.5, 'Aðu19'], [1025.5, 'Eyl19'], [1178.5, 'Eki19'], [1338.5, 'Kas19']];
const events = [299, 306, 321, 328, 335, 357, 365, 379, 423, 430, 481, 510, 590, 604, 714, 728, 808, 895, 902, 917, 946, 983, 997, 1004, 1011, 1077, 1099, 1120, 1134, 1150, 1193, 1200, 1222, 1273, 1301, 1309, 1323];
const dates = document.getElementById('dates');
dates.insertAdjacentHTML('beforeend',
  `<svg viewBox="3 849 1592 15" preserveAspectRatio="none">${months.map(([x]) => line(x, 849, x, 864, '#ccc')).join('')}${events.map(x => rect(x - 1.5, 849, 3, 4, '#fff')).join('')}</svg>` +
  months.map(([x, t]) => `<span class="label axis" style="left:${((x - 1.5) / 1592 * 100).toFixed(2)}%;top:64%">${t}</span>`).join(''));
```
